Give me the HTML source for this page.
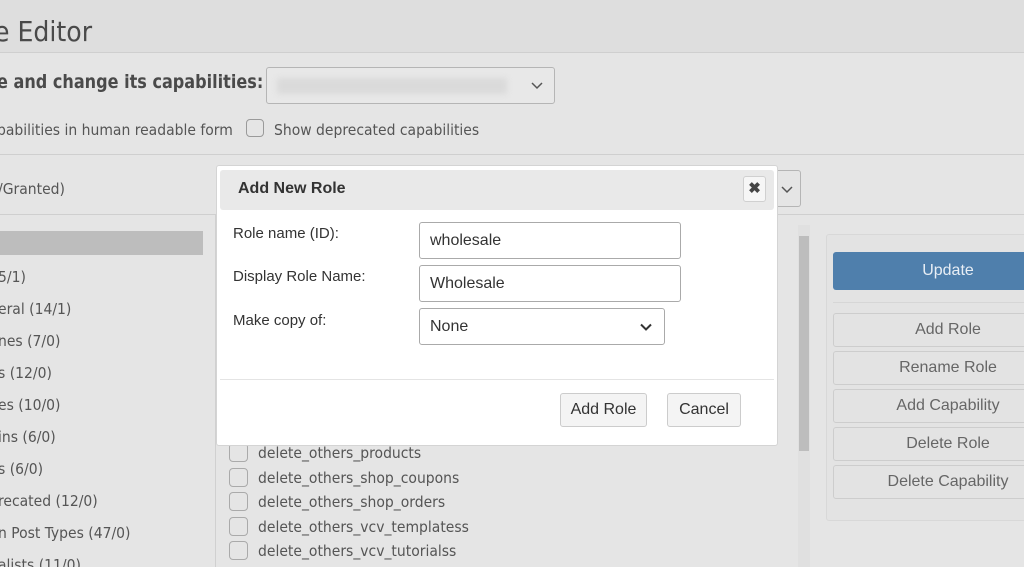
<!DOCTYPE html>
<html><head><meta charset="utf-8"><style>
*{box-sizing:border-box;margin:0;padding:0}
html,body{width:1024px;height:567px;overflow:hidden}
body{background:#e5e5e5;font-family:"Liberation Sans",sans-serif;position:relative;color:#5a5a5a}
.a{position:absolute}
.ds{font-family:"DejaVu Sans Condensed","Liberation Sans",sans-serif}
</style></head><body>
<div class="a" style="left:0;top:0;width:1024px;height:53px;background:#dedede;border-bottom:1px solid #cfcfcf"></div>
<div class="a ds" style="left:-6px;top:15px;font-size:28px;color:#4a4a4a">e Editor</div>
<div class="a ds" style="left:-3px;top:71px;font-size:19px;font-weight:bold;color:#4a4a4a;white-space:nowrap;transform:scaleX(0.94);transform-origin:left">e and change its capabilities:</div>
<div class="a" style="left:266px;top:67px;width:289px;height:37px;border:1px solid #b5b5b5;border-radius:3px;background:#e8e8e8">
<div class="a" style="left:10px;top:10px;width:230px;height:16px;background:#dadada;filter:blur(3px)"></div>
<svg class="a" style="left:264px;top:14px" width="12" height="8"><path d="M1 1l5 5 5-5" stroke="#555" stroke-width="1.5" fill="none"/></svg></div>
<div class="a ds" style="left:-3px;top:121px;font-size:15.5px;color:#555">pabilities in human readable form</div>
<div class="a" style="left:246px;top:119px;width:18px;height:18px;border:1px solid #9a9a9a;border-radius:4px"></div>
<div class="a ds" style="left:274px;top:121px;font-size:15.5px;color:#555">Show deprecated capabilities</div>
<div class="a" style="left:0;top:154px;width:1024px;height:1px;background:#cfcfcf"></div>
<div class="a ds" style="left:-2px;top:180px;font-size:15.5px;color:#555">/Granted)</div>
<div class="a" style="left:0;top:214px;width:1024px;height:1px;background:#cfcfcf"></div>
<div class="a" style="left:776px;top:170px;width:25px;height:37px;border:1px solid #b5b5b5;border-left:none;border-radius:0 3px 3px 0"><svg class="a" style="left:5px;top:15px" width="12" height="8"><path d="M1 1l5 5 5-5" stroke="#555" stroke-width="1.5" fill="none"/></svg></div>
<div class="a" style="left:0;top:231px;width:203px;height:24px;background:#bdbdbd"></div>
<div class="a" style="left:215px;top:215px;width:1px;height:352px;background:#d0d0d0"></div>
<div class="a ds" style="left:-2px;top:261px;font-size:15.5px;line-height:32px;color:#555">
<div>5/1)</div><div>eral (14/1)</div><div>nes (7/0)</div><div>s (12/0)</div><div>es (10/0)</div><div>ins (6/0)</div><div>s (6/0)</div><div>recated (12/0)</div><div>n Post Types (47/0)</div><div>alists (11/0)</div></div>
<div class="a" style="left:798px;top:225px;width:12px;height:342px;background:#e0e0e0"></div>
<div class="a" style="left:799px;top:236px;width:10px;height:215px;background:#bdbdbd"></div>
<div class="a ds" style="left:229px;top:441px;font-size:15.5px;line-height:24.5px;color:#555">
<div style="padding-left:29px;position:relative"><span class="a" style="left:0;top:2px;width:19px;height:19px;border:1px solid #aaa;border-radius:4px"></span>delete_others_products</div>
<div style="padding-left:29px;position:relative"><span class="a" style="left:0;top:2px;width:19px;height:19px;border:1px solid #aaa;border-radius:4px"></span>delete_others_shop_coupons</div>
<div style="padding-left:29px;position:relative"><span class="a" style="left:0;top:2px;width:19px;height:19px;border:1px solid #aaa;border-radius:4px"></span>delete_others_shop_orders</div>
<div style="padding-left:29px;position:relative"><span class="a" style="left:0;top:2px;width:19px;height:19px;border:1px solid #aaa;border-radius:4px"></span>delete_others_vcv_templatess</div>
<div style="padding-left:29px;position:relative"><span class="a" style="left:0;top:2px;width:19px;height:19px;border:1px solid #aaa;border-radius:4px"></span>delete_others_vcv_tutorialss</div></div>
<div class="a" style="left:826px;top:234px;width:210px;height:287px;border:1px solid #d8d8d8;border-radius:3px;background:#e3e3e3"></div>
<div class="a" style="left:833px;top:252px;width:230px;height:38px;background:#4f7fac;border-radius:3px;color:#e8eef5;font-size:16px;text-align:center;line-height:38px">Update</div>
<div class="a" style="left:833px;top:302px;width:200px;height:1px;background:#d6d6d6"></div>
<div class="a" style="left:833px;top:313px;font-size:16px;color:#666">
<div style="width:230px;height:34px;border:1px solid #cdcdcd;border-radius:3px;text-align:center;line-height:32px;margin-bottom:4px">Add Role</div>
<div style="width:230px;height:34px;border:1px solid #cdcdcd;border-radius:3px;text-align:center;line-height:32px;margin-bottom:4px">Rename Role</div>
<div style="width:230px;height:34px;border:1px solid #cdcdcd;border-radius:3px;text-align:center;line-height:32px;margin-bottom:4px">Add Capability</div>
<div style="width:230px;height:34px;border:1px solid #cdcdcd;border-radius:3px;text-align:center;line-height:32px;margin-bottom:4px">Delete Role</div>
<div style="width:230px;height:34px;border:1px solid #cdcdcd;border-radius:3px;text-align:center;line-height:32px">Delete Capability</div></div>
<!-- dialog -->
<div class="a" style="left:216px;top:165px;width:562px;height:281px;background:#fff;border:1px solid #d4d4d4;border-radius:3px;color:#333">
<div class="a" style="left:3px;top:4px;width:554px;height:40px;background:#e9e9e9;border-radius:3px"></div>
<div class="a" style="left:21px;top:14px;font-size:16px;font-weight:bold;color:#333">Add New Role</div>
<div class="a" style="left:526px;top:10px;width:23px;height:26px;border:1px solid #d0d0d0;border-radius:3px;background:#f6f6f6;font-size:15px;font-weight:bold;text-align:center;line-height:24px;color:#444">✖</div>
<div class="a" style="left:16px;top:59px;font-size:15px">Role name (ID):</div>
<div class="a" style="left:16px;top:102px;font-size:15px">Display Role Name:</div>
<div class="a" style="left:16px;top:146px;font-size:15px">Make copy of:</div>
<div class="a" style="left:202px;top:56px;width:262px;height:37px;border:1px solid #aaa;border-radius:3px;font-size:16px;padding:9px 10px">wholesale</div>
<div class="a" style="left:202px;top:99px;width:262px;height:37px;border:1px solid #aaa;border-radius:3px;font-size:16px;padding:9px 10px">Wholesale</div>
<div class="a" style="left:202px;top:142px;width:246px;height:37px;border:1px solid #aaa;border-radius:3px;font-size:16px;padding:9px 10px">None
<svg class="a" style="left:220px;top:14px" width="12" height="9"><path d="M1 1.5l5 5 5-5" stroke="#333" stroke-width="2" fill="none"/></svg></div>
<div class="a" style="left:3px;top:213px;width:554px;height:1px;background:#e4e4e4"></div>
<div class="a" style="left:343px;top:227px;width:87px;height:34px;border:1px solid #ccc;border-radius:3px;background:#f4f4f4;font-size:16px;text-align:center;line-height:32px">Add Role</div>
<div class="a" style="left:450px;top:227px;width:74px;height:34px;border:1px solid #ccc;border-radius:3px;background:#f4f4f4;font-size:16px;text-align:center;line-height:32px">Cancel</div>
</div>
</body></html>
